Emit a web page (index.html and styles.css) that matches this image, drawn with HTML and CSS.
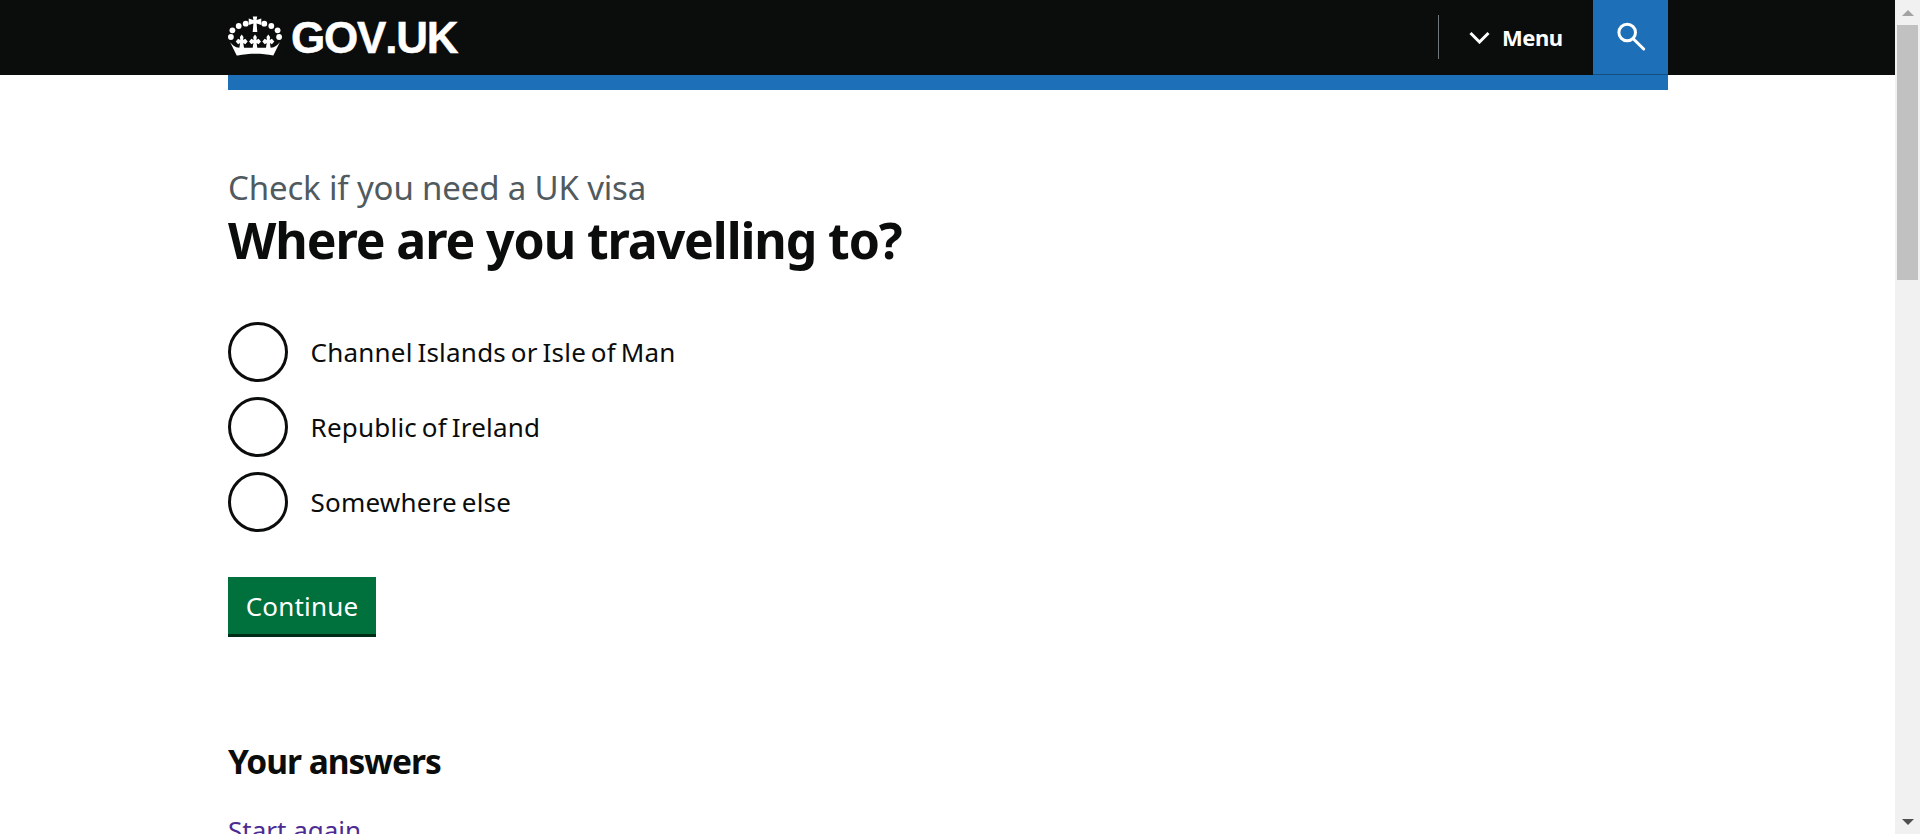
FILE: index.html
```html
<!DOCTYPE html>
<html lang="en">
<head>
<meta charset="utf-8">
<title>Where are you travelling to? - Check if you need a UK visa - GOV.UK</title>
<link rel="stylesheet" href="styles.css">
</head>
<body>
<div class="viewport">
  <div class="page">
    <header class="header">
      <div class="header-inner">
        <a class="logo" href="#">
          <svg class="crown" viewBox="0 0 54 40" aria-hidden="true">
            <defs>
              <path id="fleur" d="M-1.800 -12 L0 -14.500 L1.800 -12 L1.400 -9 L3.600 -10.200 L6 -7.500 L3.600 -4.800 L1.600 -6 L2.500 0 L-2.500 0 L-1.600 -6 L-3.600 -4.800 L-6 -7.500 L-3.600 -10.200 L-1.400 -9z"/>
            </defs>
            <g fill="#fff">
              <circle cx="17.700" cy="7.700" r="2.900"/><circle cx="10.700" cy="10" r="2.900"/><circle cx="4.400" cy="14.300" r="2.900"/><circle cx="2.900" cy="21" r="2.900"/>
              <circle cx="36.300" cy="7.700" r="2.900"/><circle cx="43.300" cy="10" r="2.900"/><circle cx="49.600" cy="14.300" r="2.900"/><circle cx="51.100" cy="21" r="2.900"/>
              <path d="M24.800 0.500h4.400l-.6 3.500 4.700-1.500v6.400l-4.700-1.500.7 8.600h-4.600l.7-8.600-4.700 1.500V2.500l4.700 1.500z"/>
              <use href="#fleur" x="13.700" y="33"/>
              <use href="#fleur" x="27" y="33"/>
              <use href="#fleur" x="40.300" y="33"/>
              <path d="M8.700 39.500 1.800 25.500c2 3.200 5.800 6.500 10 6.200h30.400c4.200.3 8-3 10-6.200l-6.900 14c-11.500-2.500-24.100-2.500-35.600 0z"/>
            </g>
          </svg>
          <span class="wordmark">GOV.UK</span>
        </a>
        <nav class="nav">
          <button class="menu" type="button">
            <svg class="chevron" viewBox="0 0 21 13" aria-hidden="true"><path d="M1.500 2l9 9 9-9" fill="none" stroke="#fff" stroke-width="3"/></svg>
            <span>Menu</span>
          </button>
          <button class="search" type="button" aria-label="Search">
            <svg viewBox="0 0 30 30" aria-hidden="true"><circle cx="11.200" cy="10.500" r="8.300" fill="none" stroke="#fff" stroke-width="3"/><path d="M17.500 17l10.200 10" stroke="#fff" stroke-width="3" stroke-linecap="round"/></svg>
          </button>
        </nav>
      </div>
    </header>
    <div class="rule"></div>
    <main class="main">
      <p class="caption">Check if you need a UK visa</p>
      <h1 class="title">Where are you travelling to?</h1>
      <div class="radios">
        <label class="radio"><span class="circle"></span><span>Channel Islands or Isle of Man</span></label>
        <label class="radio"><span class="circle"></span><span>Republic of Ireland</span></label>
        <label class="radio"><span class="circle"></span><span>Somewhere else</span></label>
      </div>
      <button class="continue" type="button">Continue</button>
      <h2 class="answers">Your answers</h2>
      <a class="restart" href="#">Start again</a>
    </main>
  </div>
  <aside class="scrollbar" aria-hidden="true">
    <div class="arrow up"></div>
    <div class="track"><div class="thumb"></div></div>
    <div class="arrow down"></div>
  </aside>
</div>
</body>
</html>
```
FILE: styles.css
```css
* { box-sizing: border-box; }
html, body { margin: 0; height: 100%; overflow: hidden; background: #fff; }
body { font-family: "Noto Sans", Arial, sans-serif; color: #0b0c0c; }
.viewport { display: flex; height: 834px; }
.page { flex: 1; min-width: 0; overflow: hidden; }
.header { background: #0b0c0c; height: 75px; }
.header-inner { width: 1440px; margin-left: 228px; height: 75px; display: flex; justify-content: space-between; }
.logo { display: flex; align-items: center; gap: 9px; color: #fff; text-decoration: none; height: 75px; }
.crown { width: 54px; height: 40px; margin-top: -4px; }
.wordmark { font-family: "Liberation Sans", Arial, sans-serif; font-weight: 700; font-size: 44px; line-height: 1; font-kerning: none; letter-spacing: -1.2px; -webkit-text-stroke: 0.5px #fff; }
.nav { display: flex; }
.menu { display: flex; align-items: center; gap: 12px; width: 155px; height: 44px; margin-top: 15px; padding: 0 0 0 30px; border: 0; border-left: 1px solid #6f777b; background: none; color: #fff; font: 700 22px "Noto Sans", Arial, sans-serif; letter-spacing: -0.5px; }
.chevron { width: 21px; height: 13px; flex: none; }
.search { width: 75px; height: 75px; border: 0; border-bottom: 1px solid #144e81; background: #1d70b8; padding: 0; display: flex; align-items: center; justify-content: center; }
.search svg { width: 30px; height: 30px; }
.rule { width: 1440px; height: 15px; margin-left: 228px; background: #1d70b8; }
.main { padding: 78px 0 0 228px; }
.caption { margin: 0; font-size: 33px; line-height: 40px; color: #505a5f; letter-spacing: -0.16px; }
.title { margin: 2px 0 52px; font-size: 50px; line-height: 60px; font-weight: 700; letter-spacing: -1.1px; }
.radios { display: flex; flex-direction: column; gap: 15px; }
.radio { display: flex; align-items: center; gap: 22.500px; height: 60px; font-size: 26px; color: #0b0c0c; letter-spacing: 0.22px; word-spacing: -2.200px; }
.circle { width: 60px; height: 60px; border: 3px solid #0b0c0c; border-radius: 50%; flex: none; }
.continue { display: block; margin-top: 45px; width: 148px; height: 60px; padding: 0; border: 0; border-bottom: 3px solid #002d18; background: #00703c; color: #fff; font: 400 26px "Noto Sans", Arial, sans-serif; letter-spacing: 0.2px; }
.answers { margin: 104px 0 0; font-size: 33.500px; line-height: 40px; font-weight: 700; letter-spacing: -1px; }
.restart { display: block; margin-top: 34px; font-size: 26px; line-height: 30px; color: #4c2c92; }
.scrollbar { width: 25px; height: 834px; flex: none; background: #f1f1f1; display: flex; flex-direction: column; }
.arrow { height: 25px; flex: none; display: flex; align-items: center; justify-content: center; }
.arrow::after { content: ""; border-left: 6px solid transparent; border-right: 6px solid transparent; }
.up::after { border-bottom: 6px solid #a3a3a3; }
.down::after { border-top: 6px solid #505050; }
.track { flex: 1; padding: 0 2px; }
.thumb { height: 255px; background: #c1c1c1; }
```
